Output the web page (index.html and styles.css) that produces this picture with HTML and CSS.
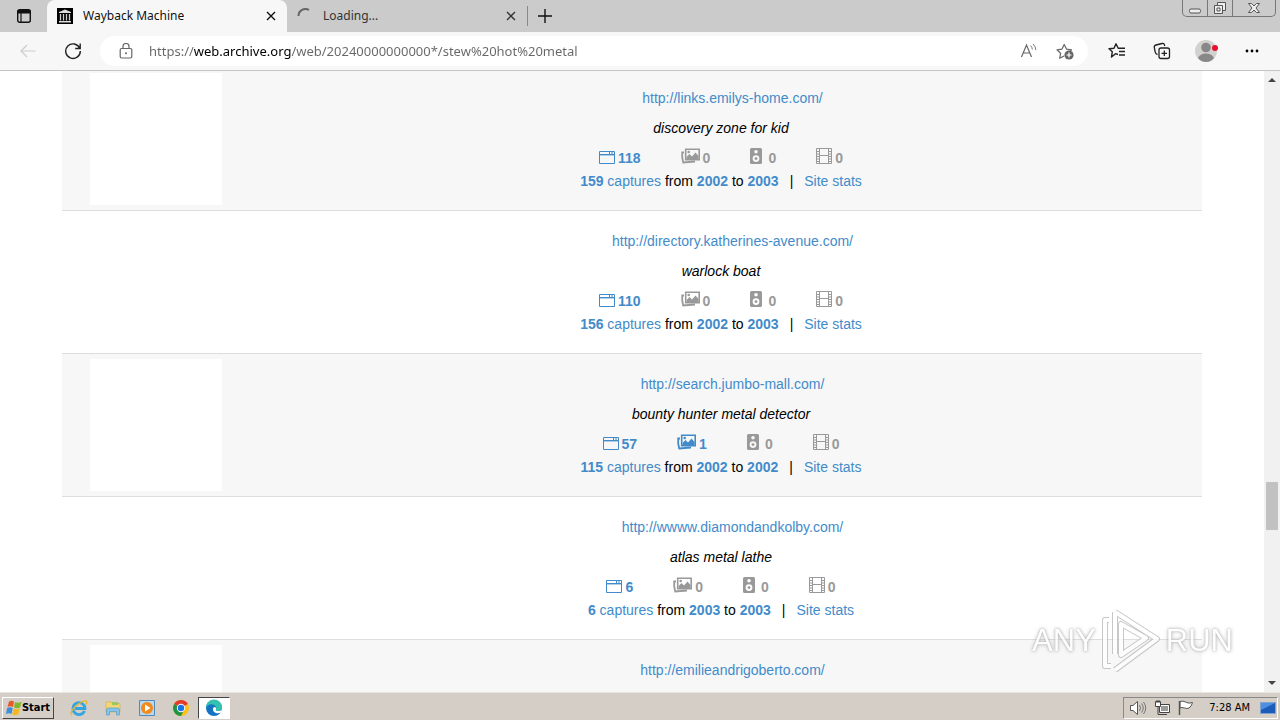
FILE: index.html
```html
<!DOCTYPE html>
<html lang="en">
<head>
  <meta charset="UTF-8" />
  <title>Wayback Machine</title>
  <link rel="stylesheet" href="styles.css">
</head>
<body>

  <!-- shared icons -->
  <svg class="defs" aria-hidden="true">
    <symbol id="i-web" viewBox="0 0 16 14">
      <path d="M.5 1.5h15v12H.5zM.5 4.5h15M10.5 1.5v3M13 1.5v3" fill="none" stroke="currentColor"/>
      <path d="M0 4h16v1.4H0z" fill="currentColor"/>
    </symbol>
    <symbol id="i-image" viewBox="0 0 19 16">
      <path d="M4.700 1.200h13.500v10.600H4.700z" fill="none" stroke="currentColor" stroke-width="1.600"/>
      <path d="M5.500 11.500V9l3-3 2.500 2.500 3.500-4 3 3.500v3.500z" fill="currentColor"/>
      <circle cx="7.700" cy="4" r="1.300" fill="currentColor"/>
      <path d="M3 4.500H1.200v5L2.200 14.500 14 13.500" fill="none" stroke="currentColor" stroke-width="1.800"/>
    </symbol>
    <symbol id="i-audio" viewBox="0 0 12 16">
      <path fill-rule="evenodd" fill="currentColor" d="M1.500 0h9Q12 0 12 1.500v13q0 1.500-1.500 1.500h-9Q0 16 0 14.500v-13Q0 0 1.500 0zM6 2a1.800 1.800 0 1 0 0 3.600A1.800 1.800 0 1 0 6 2zM6 7.200a3.400 3.400 0 1 0 0 6.800 3.400 3.400 0 1 0 0-6.800z"/>
      <circle cx="6" cy="10.600" r="1.400" fill="currentColor"/>
    </symbol>
    <symbol id="i-video" viewBox="0 0 16 16">
      <path d="M.5.5h15v15H.5zM3.500.500v15M12.500.500v15M3.500 7.500h9" fill="none" stroke="currentColor"/>
      <path d="M0 3.500h3.500M0 6h3.500M0 8.500h3.500M0 11h3.500M0 13.500h3.500M12.500 3.500H16M12.500 6H16M12.500 8.500H16M12.500 11H16M12.500 13.500H16" fill="none" stroke="currentColor"/>
    </symbol>
    <symbol id="i-close" viewBox="0 0 10 10">
      <path d="M1 1l8 8M9 1L1 9" fill="none" stroke="currentColor" stroke-width="1.400"/>
    </symbol>
  </svg>

  <header class="tabstrip">
    <button class="tab-actions" aria-label="Tab actions">
      <svg width="16" height="16" viewBox="0 0 16 16"><rect x="1.700" y="1.700" width="12.600" height="12.600" rx="2" fill="none" stroke="#111" stroke-width="1.400"/><path d="M1.500 2h13v3.500h-13z" fill="#111"/><path d="M5 5v9" stroke="#111" stroke-width="1.200"/></svg>
    </button>
    <div class="tab tab-active">
      <svg class="favicon" width="16" height="16" viewBox="0 0 16 16"><path d="M0 0h16v16H0z"/><path d="M2 4l6-2.500L14 4v1H2zM2 13h12v1.500H2z" fill="#ddd"/><path d="M3.500 6v6.500M6.500 6v6.500M9.500 6v6.500M12.500 6v6.500" stroke="#ccc" stroke-width="1.300"/></svg>
      <span>Wayback Machine</span>
      <button class="tab-close" aria-label="Close tab"><svg width="10" height="10"><use href="#i-close"/></svg></button>
    </div>
    <div class="tab">
      <svg class="favicon" width="16" height="16" viewBox="0 0 16 16"><path d="M1.500 8A7 7 0 0 1 12 2" fill="none" stroke="#666" stroke-width="2"/></svg>
      <span>Loading...</span>
      <button class="tab-close" aria-label="Close tab"><svg width="10" height="10"><use href="#i-close"/></svg></button>
    </div>
    <button class="new-tab" aria-label="New tab"><svg width="14" height="14" viewBox="0 0 14 14"><path d="M7 0v14M0 7h14" stroke="#111" stroke-width="1.400"/></svg></button>
    <div class="window-controls">
      <button aria-label="Minimize"><svg width="14" height="14" viewBox="0 0 14 14"><rect x="1.500" y="8" width="11" height="4" rx="1.500" fill="#eee" stroke="#555"/></svg></button>
      <button aria-label="Restore"><svg width="14" height="14" viewBox="0 0 14 14"><path d="M4.500 1.500h8v8h-8z" fill="#eee" stroke="#555"/><path d="M1.500 4.500h8v8h-8z" fill="#eee" stroke="#555"/><path d="M4 7h3v3H4z" fill="none" stroke="#555"/></svg></button>
      <button class="wide" aria-label="Close window"><svg width="14" height="14" viewBox="0 0 14 14"><path d="M1.500 2.500h3L7 5l2.500-2.500h3L9 7l3.500 4.500h-3L7 9l-2.500 2.500h-3L5 7z" fill="#eee" stroke="#555"/></svg></button>
    </div>
  </header>

  <div class="toolbar">
    <button aria-label="Back"><svg width="16" height="16" viewBox="0 0 16 16"><path d="M15.500 8H1M7 2L1 8l6 6" fill="none" stroke="#ccc" stroke-width="1.200"/></svg></button>
    <button aria-label="Refresh"><svg width="18" height="18" viewBox="0 0 18 18"><path d="M15.800 6.500A7.300 7.300 0 1 0 16.300 9M16.200 1.500v5h-5" fill="none" stroke="#222" stroke-width="1.400"/></svg></button>
    <div class="address">
      <svg width="14" height="16" viewBox="0 0 14 16"><rect x="1.200" y="5.500" width="11.600" height="9.500" rx="1.500" fill="none" stroke="#666" stroke-width="1.200"/><path d="M4 5.500V3.500a3 3 0 0 1 6 0v2" fill="none" stroke="#666" stroke-width="1.200"/><circle cx="7" cy="10.300" r="1" fill="#666"/></svg>
      <input type="text" class="url" aria-label="Address" value="https://web.archive.org/web/20240000000000*/stew%20hot%20metal">
      <button aria-label="Read aloud"><svg width="18" height="16" viewBox="0 0 18 16"><path d="M1.500 14L6.500 2l5 12M3.300 10h6.400" fill="none" stroke="#666" stroke-width="1.200"/><path d="M10.500 2.500q1.800 1.500 1.800 4M13 1q2.800 2.500 2.800 6" fill="none" stroke="#777"/></svg></button>
      <button aria-label="Add to favorites"><svg width="18" height="18" viewBox="0 0 18 18"><path d="M8 14l-4.300 2.300.9-5L1 7.800l5-.7L8.200 2.500l2.300 4.600 5 .7-1.500 1.500" fill="none" stroke="#666" stroke-width="1.200" stroke-linejoin="round"/><circle cx="13" cy="13" r="4.600" fill="#666"/><path d="M13 10.500v5M10.500 13h5" stroke="#fff" stroke-width="1.200"/></svg></button>
    </div>
    <button aria-label="Favorites"><svg width="18" height="18" viewBox="0 0 18 18"><path d="M10 12.500L7.500 11.700 3.500 15l.8-5.300L1 6.800l5-.6L8 1.800l2.200 4.400H17M11 9.500h6M11 13h6" fill="none" stroke="#222" stroke-width="1.400" stroke-linejoin="round"/></svg></button>
    <button aria-label="Collections"><svg width="18" height="18" viewBox="0 0 18 18"><path d="M4.500 12.500Q2.500 12 2.200 10L1.300 5.500Q1 3.500 3 3l6-1.500q2-.5 2.500 1.500l.3 1" fill="none" stroke="#222" stroke-width="1.300"/><rect x="6" y="6" width="10.500" height="10.500" rx="2" fill="#f7f7f7" stroke="#222" stroke-width="1.300"/><path d="M11.300 8.500v5.500M8.500 11.300H14" stroke="#222" stroke-width="1.300"/></svg></button>
    <button aria-label="Profile"><svg width="24" height="24" viewBox="0 0 24 24"><circle cx="11" cy="12" r="11" fill="#d2d1cf"/><circle cx="11" cy="8.500" r="4.800" fill="#888"/><path d="M3 19q2-4.500 8-4.500t8 4.500q-3 4-8 4t-8-4z" fill="#888"/><circle cx="20" cy="9" r="3" fill="#e8112d"/></svg></button>
    <button aria-label="Settings and more"><svg width="14" height="4" viewBox="0 0 14 4"><circle cx="2" cy="2" r="1.400"/><circle cx="7" cy="2" r="1.400"/><circle cx="12" cy="2" r="1.400"/></svg></button>
  </div>

  <div class="viewport">
    <main class="results">
      <article class="result shaded">
        <div class="thumb"></div>
        <div class="info">
          <a class="result-url" href="#">http://links.emilys-home.com/</a>
          <p class="snippet">discovery zone for kid</p>
          <div class="counts">
            <span class="on"><svg width="16" height="14"><use href="#i-web"/></svg>118</span>
            <span><svg width="19" height="16"><use href="#i-image"/></svg>0</span>
            <span class="audio"><svg width="12" height="16"><use href="#i-audio"/></svg>0</span>
            <span><svg width="16" height="16"><use href="#i-video"/></svg>0</span>
          </div>
          <p class="captures"><a href="#"><b>159</b> captures</a> from <a href="#"><b>2002</b></a> to <a href="#"><b>2003</b></a><i>|</i><a href="#">Site stats</a></p>
        </div>
      </article>

      <article class="result">
        <div class="thumb"></div>
        <div class="info">
          <a class="result-url" href="#">http://directory.katherines-avenue.com/</a>
          <p class="snippet">warlock boat</p>
          <div class="counts">
            <span class="on"><svg width="16" height="14"><use href="#i-web"/></svg>110</span>
            <span><svg width="19" height="16"><use href="#i-image"/></svg>0</span>
            <span class="audio"><svg width="12" height="16"><use href="#i-audio"/></svg>0</span>
            <span><svg width="16" height="16"><use href="#i-video"/></svg>0</span>
          </div>
          <p class="captures"><a href="#"><b>156</b> captures</a> from <a href="#"><b>2002</b></a> to <a href="#"><b>2003</b></a><i>|</i><a href="#">Site stats</a></p>
        </div>
      </article>

      <article class="result shaded">
        <div class="thumb"></div>
        <div class="info">
          <a class="result-url" href="#">http://search.jumbo-mall.com/</a>
          <p class="snippet">bounty hunter metal detector</p>
          <div class="counts">
            <span class="on"><svg width="16" height="14"><use href="#i-web"/></svg>57</span>
            <span class="on"><svg width="19" height="16"><use href="#i-image"/></svg>1</span>
            <span class="audio"><svg width="12" height="16"><use href="#i-audio"/></svg>0</span>
            <span><svg width="16" height="16"><use href="#i-video"/></svg>0</span>
          </div>
          <p class="captures"><a href="#"><b>115</b> captures</a> from <a href="#"><b>2002</b></a> to <a href="#"><b>2002</b></a><i>|</i><a href="#">Site stats</a></p>
        </div>
      </article>

      <article class="result">
        <div class="thumb"></div>
        <div class="info">
          <a class="result-url" href="#">http://wwww.diamondandkolby.com/</a>
          <p class="snippet">atlas metal lathe</p>
          <div class="counts">
            <span class="on"><svg width="16" height="14"><use href="#i-web"/></svg>6</span>
            <span><svg width="19" height="16"><use href="#i-image"/></svg>0</span>
            <span class="audio"><svg width="12" height="16"><use href="#i-audio"/></svg>0</span>
            <span><svg width="16" height="16"><use href="#i-video"/></svg>0</span>
          </div>
          <p class="captures"><a href="#"><b>6</b> captures</a> from <a href="#"><b>2003</b></a> to <a href="#"><b>2003</b></a><i>|</i><a href="#">Site stats</a></p>
        </div>
      </article>

      <article class="result shaded">
        <div class="thumb"></div>
        <div class="info">
          <a class="result-url" href="#">http://emilieandrigoberto.com/</a>
        </div>
      </article>
    </main>

    <div class="scrollbar" aria-hidden="true">
      <svg width="8" height="4" viewBox="0 0 8 4"><path d="M0 4l4-4 4 4z" fill="#444"/></svg>
      <div class="track">
        <div class="track-before"></div>
        <div class="track-thumb"></div>
        <div class="track-after"></div>
      </div>
      <svg width="8" height="4" viewBox="0 0 8 4"><path d="M0 0l4 4 4-4z" fill="#444"/></svg>
    </div>

    <div class="watermark">
      <span>ANY</span>
      <svg width="60" height="66" viewBox="0 0 60 66">
        <g fill="none" stroke-linejoin="round">
          <path d="M14 4v42M14 4l42 27-42 31M20 16v31l25-17zM8 12H4v46h6" stroke="#bbb" stroke-width="6"/>
          <path d="M14 4v42M14 4l42 27-42 31M20 16v31l25-17zM8 12H4v46h6" stroke="#fff" stroke-width="4"/>
        </g>
      </svg>
      <span>RUN</span>
    </div>
  </div>

  <footer class="taskbar">
    <button class="start">
      <svg width="16" height="16" viewBox="0 0 16 16"><path d="M3 1.500q2.500-1.500 5 0L7 7q-2.500-1.500-5.500 0z" fill="#e8592b"/><path d="M9 2q2.500 1.500 6.500 0L14 7.500q-3 1.500-6 0z" fill="#7db928"/><path d="M1.200 8q2.500-1.500 5.500 0l-1.200 6q-2.500-1.500-5.500 0z" fill="#3a8edb"/><path d="M7.700 8.500q2.500 1.500 6 0l-1.500 6q-3 1.500-6 0z" fill="#f5b81c"/></svg>
      Start
    </button>
    <div class="quick">
      <button aria-label="Internet Explorer"><svg width="18" height="18" viewBox="0 0 18 18"><path d="M14.500 12A6 6 0 1 1 15 9.500H5" fill="none" stroke="#35a5df" stroke-width="2.800"/><path d="M2 16Q-1 13 6 7q7-6 10-5 1.500 1 0 3.500" fill="none" stroke="#eab52e" stroke-width="1.400"/></svg></button>
      <button aria-label="Windows Explorer"><svg width="18" height="18" viewBox="0 0 18 18"><path d="M2 3h5l1.500 1.500H16V13H2z" fill="#f3d676" stroke="#d5b04a" stroke-width=".7"/><path d="M8 3h6v3H8z" fill="#9bc85e"/><path d="M2.500 16v-5q0-2 2-2h9q2 0 2 2v5h-3v-3.500h-7V16z" fill="#85c4ea" stroke="#5a9dc9" stroke-width=".7"/></svg></button>
      <button aria-label="Media Player"><svg width="18" height="18" viewBox="0 0 18 18"><path d="M1.500 1.500h15v15h-15z" fill="#b9d8ef" stroke="#5389b8"/><circle cx="9" cy="9" r="6" fill="#f08a1c"/><path d="M7 5.500l5.500 3.500L7 12.500z" fill="#fff"/></svg></button>
      <button aria-label="Chrome"><svg width="18" height="18" viewBox="0 0 18 18"><circle cx="9" cy="9" r="8" fill="#fbc116"/><path d="M9 9L2.100 5A8 8 0 0 1 15.900 5z" fill="#e33b2e"/><path d="M9 9L2.100 5A8 8 0 0 0 9 17l3-6z" fill="#229342"/><circle cx="9" cy="9" r="4.200" fill="#fff"/><circle cx="9" cy="9" r="3.200" fill="#1a73e8"/></svg></button>
      <button class="current" aria-label="Edge"><svg width="18" height="18" viewBox="0 0 18 18"><circle cx="9" cy="9" r="8" fill="#1573c4"/><path d="M1 9A8 8 0 0 1 17 8q.3 4-4 4-2.500 0-2-1.500 1-2-.5-3.500Q8 4.500 4.500 5.500 2 6.500 1 9z" fill="#35c1b0"/><path d="M8 9.500q-.5 3 3 4.500 2.500.8 5-.5l1-3q-1.500 1.800-4 1.500-2.500 0-2-1.500Q11.500 8 9.500 8 8 8.500 8 9.500z" fill="#fff"/></svg></button>
    </div>
    <div class="tray">
      <svg width="18" height="16" viewBox="0 0 18 16"><path d="M1.500 5.500H4L8.500 1.500v13L4 10.500H1.500z" fill="#fff" stroke="#555"/><path d="M10.500 5q2 3 0 6M12.500 3.500q3.500 4.500 0 9M14.500 2q4.500 6 0 12" fill="none" stroke="#777"/></svg>
      <svg width="18" height="16" viewBox="0 0 18 16"><path d="M6.500 4.500h10v8h-10z" fill="#ccc" stroke="#444"/><path d="M7.500 5.500h8v6h-8z" fill="#999" stroke="#fff"/><path d="M2.500 1.500h5v5h-5z" fill="#fff" stroke="#444"/><path d="M4 0v3M6 0v3M5 7v7.500h9" stroke="#444" fill="none"/></svg>
      <svg width="18" height="16" viewBox="0 0 18 16"><path d="M3 1.500q3-1 5.500.5 3 2 7 .5-1 4-3.500 5.500-2 1-4.500 0T3 8z" fill="#fff" stroke="#555"/><path d="M2.500 1v14" stroke="#555" stroke-width="1.500"/></svg>
      <time>7:28 AM</time>
      <svg width="16" height="14" viewBox="0 0 16 14"><path d="M.5 1.500h15v11H.5z" fill="#1d5bb8" stroke="#7fa2cf"/><path d="M1 2h14L1 9z" fill="#4d8fe0"/></svg>
    </div>
  </footer>

</body>
</html>
```
FILE: styles.css
```css
* {
  box-sizing: border-box;
}
html, body {
  margin: 0;
  height: 100%;
}
body {
  display: flex;
  flex-direction: column;
  overflow: hidden;
  background: #fff;
  color: #000;
  font-family: "Liberation Sans", Arial, sans-serif;
  font-size: 14px;
  line-height: 20px;
}
button {
  display: flex;
  align-items: center;
  justify-content: center;
  margin: 0;
  padding: 0;
  border: 0;
  background: none;
  color: inherit;
  cursor: pointer;
}
svg {
  display: block;
  flex-shrink: 0;
}
p {
  margin: 0;
}
a {
  color: #428bca;
  text-decoration: none;
}
.defs {
  position: absolute;
  width: 0;
  height: 0;
}

/* Browser tabs */
.tabstrip {
  display: flex;
  flex-shrink: 0;
  height: 32px;
  background: #cbcbcb;
  font-family: "Noto Sans", "Segoe UI", sans-serif;
  font-size: 12px;
}
.tab-actions {
  width: 47px;
}
.tab {
  display: flex;
  align-items: center;
  width: 240px;
  padding: 0 10px;
  color: #333;
}
.tab-active {
  border-radius: 8px 8px 0 0;
  background: #f7f7f7;
  color: #111;
}
.tab span {
  flex: 1;
  margin-left: 10px;
}
.tab-close {
  width: 12px;
  height: 20px;
}
.new-tab {
  align-self: center;
  width: 34px;
  height: 20px;
  border-left: 1px solid #888;
}
.window-controls {
  display: flex;
  height: 17px;
  margin-left: auto;
  margin-right: 4px;
  border: 1px solid #777;
  border-top: 0;
  border-radius: 0 0 5px 5px;
}
.window-controls button {
  width: 25px;
  border-right: 1px solid #777;
}
.window-controls .wide {
  width: 42px;
  border-right: 0;
}

/* Toolbar */
.toolbar {
  display: flex;
  align-items: center;
  flex-shrink: 0;
  height: 39px;
  padding: 0 6px 0 5px;
  border-bottom: 1px solid #c4c4c4;
  background: #f7f7f7;
}
.toolbar > button {
  width: 45px;
  height: 30px;
}
.address {
  display: flex;
  flex: 1;
  align-items: center;
  height: 30px;
  margin: 0 6px 0 5px;
  padding: 0 14px 0 19px;
  border-radius: 15px;
  background: #fff;
}
.address button {
  width: 18px;
  height: 24px;
  margin-left: 18px;
}
.url {
  flex: 1;
  min-width: 0;
  margin: 0 0 0 16px;
  padding: 0;
  border: 0;
  outline: 0;
  /* host name is darker than the rest of the address */
  background: linear-gradient(90deg, #666 45px, #000 45px, #000 142px, #666 142px);
  background-clip: text;
  -webkit-background-clip: text;
  color: transparent;
  font-family: "Noto Sans", "Segoe UI", sans-serif;
  font-size: 13px;
  line-height: 20px;
}

/* Search results */
.viewport {
  position: relative;
  display: flex;
  flex: 1;
  min-height: 0;
  overflow: hidden;
}
.results {
  flex: 1;
  max-width: 1140px;
  margin: -4px auto 0;
}
.result {
  display: grid;
  grid-template-columns: 178px 1fr;
  height: 143px;
  padding-top: 5px;
  border-top: 1px solid #ddd;
}
.shaded {
  background: #f7f7f7;
}
.thumb {
  width: 132px;
  height: 132px;
  margin-left: 28px;
  background: #fff;
}
.info {
  display: flex;
  flex-direction: column;
  align-items: center;
  padding-top: 15px;
}
.result-url {
  padding-left: 23px;
}
.snippet {
  margin-top: 10px;
  font-style: italic;
}
.counts {
  display: flex;
  gap: 40px;
  margin-top: 10px;
  color: #999;
  font-weight: bold;
}
.counts span {
  display: flex;
  align-items: center;
  gap: 3px;
}
.counts svg {
  margin-bottom: 4px;
}
.counts .on:first-child svg {
  margin-bottom: 2px;
}
.counts .audio {
  gap: 6px;
}
.counts .on {
  color: #428bca;
}
.captures {
  margin-top: 3px;
}
.captures i {
  margin: 0 11px;
  font-style: normal;
}

/* Scrollbar */
.scrollbar {
  display: flex;
  flex-direction: column;
  align-items: center;
  width: 16px;
  padding: 7px 2px;
  background: #f1f1f1;
}
.track {
  display: flex;
  flex: 1;
  flex-direction: column;
  width: 100%;
  padding: 6px 0;
}
.track-before {
  flex: 393;
}
.track-thumb {
  height: 48px;
  background: #c1c1c1;
}
.track-after {
  flex: 145;
}

.watermark {
  position: absolute;
  right: 47px;
  bottom: 18px;
  display: flex;
  align-items: center;
  gap: 5px;
  color: #fff;
  font-size: 31px;
  line-height: 40px;
  text-shadow: 0 0 2px #999, 0 0 4px #aaa;
  opacity: 0.8;
  pointer-events: none;
}

/* Taskbar */
.taskbar {
  display: flex;
  align-items: center;
  flex-shrink: 0;
  height: 28px;
  padding: 2px 2px 0;
  border-top: 1px solid #e8e6e2;
  background: #d4cec6;
}
.start {
  width: 52px;
  height: 22px;
  border: 1px solid;
  border-color: #fff #444 #444 #fff;
  font-family: "DejaVu Sans Condensed", Tahoma, sans-serif;
  font-size: 11px;
  font-weight: bold;
}
.quick {
  display: flex;
  margin-left: 8px;
}
.quick button {
  width: 34px;
  height: 22px;
}
.quick .current {
  width: 32px;
  border: 1px solid;
  border-color: #444 #fff #fff #444;
  background: #fff;
}
.tray {
  display: flex;
  align-items: center;
  gap: 6px;
  height: 22px;
  margin-left: auto;
  padding: 0 1px 0 5px;
  border: 1px solid;
  border-color: #888 #fff #fff #888;
}
.tray time {
  margin: 0 4px 0 8px;
  font-family: "DejaVu Sans Condensed", Tahoma, sans-serif;
  font-size: 11px;
}
```
